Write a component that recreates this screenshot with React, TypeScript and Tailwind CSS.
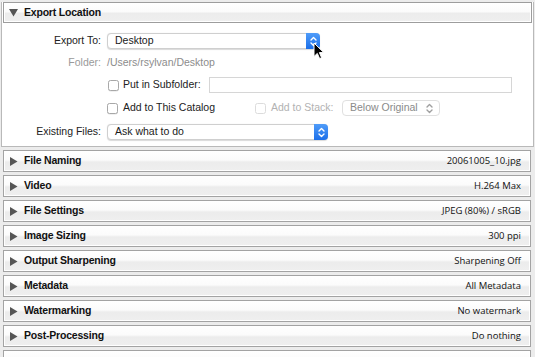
import React from 'react';

const rows = [
  { title: 'File Naming', value: '20061005_10.jpg' },
  { title: 'Video', value: 'H.264 Max' },
  { title: 'File Settings', value: 'JPEG (80%) / sRGB' },
  { title: 'Image Sizing', value: '300 ppi' },
  { title: 'Output Sharpening', value: 'Sharpening Off' },
  { title: 'Metadata', value: 'All Metadata' },
  { title: 'Watermarking', value: 'No watermark' },
  { title: 'Post-Processing', value: 'Do nothing' },
  { title: '', value: '' },
];

const barBg =
  'bg-[linear-gradient(to_bottom,#ffffff_0%,#fbfbfb_45%,#ececec_55%,#efefef_100%)]';

const Stepper = ({ color }: { color: string }) => (
  <svg width="7" height="11" viewBox="0 0 7 11" fill="none" stroke={color} strokeWidth="1.4" strokeLinecap="round" strokeLinejoin="round">
    <path d="M1 4 L3.5 1.5 L6 4" />
    <path d="M1 7 L3.5 9.5 L6 7" />
  </svg>
);

const BlueSelect = ({ text, width }: { text: string; width: string }) => (
  <div className={`${width} h-[16px] flex items-stretch rounded-[4px] bg-white border border-[#cfcfcf] shadow-[0_0.5px_1px_rgba(0,0,0,0.15)]`}>
    <div className="flex-1 flex items-center pl-[7px] text-[#1a1a1a]">{text}</div>
    <div className="w-[14px] -my-[1px] -mr-[1px] rounded-r-[4px] bg-[linear-gradient(to_bottom,#4f9cf9,#1c6fe9)] flex items-center justify-center">
      <Stepper color="#ffffff" />
    </div>
  </div>
);

const Checkbox = ({ disabled }: { disabled?: boolean }) => (
  <div
    className={`w-[11px] h-[11px] rounded-[2.5px] bg-white border ${
      disabled ? 'border-[#dcdcdc]' : 'border-[#a8a8a8] shadow-[0_0.5px_0.5px_rgba(0,0,0,0.12)]'
    }`}
  />
);

export default function App() {
  return (
    <div className="relative w-[535px] h-[357px] overflow-hidden bg-[#ececec] pt-[2px] font-['Liberation_Sans',Arial,sans-serif]">
      {/* Export Location panel */}
      <div className="ml-[1px] w-[533px] border-x border-b border-[#b9b9b9] bg-white">
        <div className={`mx-[1px] h-[21px] border border-[#9d9d9d] shadow-[inset_0_0_0_1px_#ffffff] ${barBg} flex items-center`}>
          <svg width="9" height="8" viewBox="0 0 9 8" className="ml-[5px]">
            <path d="M0 0 H9 L4.5 7.5 Z" fill="#555555" />
          </svg>
          <span className="ml-[6px] text-[10.5px] font-bold text-[#111] tracking-[-0.2px]">Export Location</span>
        </div>

        <div className="pt-[10px] pb-[6px] text-[10.5px]">
          {/* Export To */}
          <div className="flex items-center h-[16px]">
            <div className="w-[99px] text-right text-[#222]">Export To:</div>
            <div className="ml-[6px]">
              <BlueSelect text="Desktop" width="w-[213px]" />
            </div>
          </div>

          {/* Folder */}
          <div className="flex items-center h-[16px] mt-[6px]">
            <div className="w-[99px] text-right text-[#9a9a9a]">Folder:</div>
            <div className="ml-[6px] text-[#8c8c8c]">/Users/rsylvan/Desktop</div>
          </div>

          {/* Put in Subfolder */}
          <div className="flex items-center h-[16px] mt-[6px] pl-[106px]">
            <Checkbox />
            <span className="ml-[4px] w-[86px] text-[#222]">Put in Subfolder:</span>
            <div className="w-[303px] h-[16px] bg-white border border-[#d6d6d6]" />
          </div>

          {/* Add to This Catalog */}
          <div className="flex items-center h-[16px] mt-[7px] pl-[105px]">
            <Checkbox />
            <span className="ml-[5px] w-[132px] text-[#222]">Add to This Catalog</span>
            <Checkbox disabled />
            <span className="ml-[5px] w-[71px] text-[#b2b2b2]">Add to Stack:</span>
            <div className="w-[98px] h-[16px] flex items-center justify-between rounded-[4px] bg-white border border-[#e0e0e0] pl-[7px] pr-[6px] text-[#8a8a8a]">
              <span>Below Original</span>
              <Stepper color="#a0a0a0" />
            </div>
          </div>

          {/* Existing Files */}
          <div className="flex items-center h-[16px] mt-[8px]">
            <div className="w-[99px] text-right text-[#222]">Existing Files:</div>
            <div className="ml-[6px]">
              <BlueSelect text="Ask what to do" width="w-[221px]" />
            </div>
          </div>
        </div>
      </div>

      {/* Collapsed sections */}
      <div className="mt-[3px] flex flex-col gap-[3px]">
        {rows.map((r, i) => (
          <div
            key={i}
            className={`ml-[3px] w-[528px] h-[22px] border border-[#a3a3a3] shadow-[inset_0_0_0_1px_#ffffff] ${barBg} flex items-center`}
          >
            {r.title && (
              <>
                <svg width="8" height="9" viewBox="0 0 8 9" className="ml-[6px]">
                  <path d="M0 0 L7.5 4.5 L0 9 Z" fill="#555555" />
                </svg>
                <span className="ml-[6px] text-[10.5px] font-bold text-[#111] tracking-[-0.2px]">{r.title}</span>
                <span className="ml-auto mr-[9px] text-[9.5px] text-[#111] font-['Open_Sans',Arial,sans-serif]">{r.value}</span>
              </>
            )}
          </div>
        ))}
      </div>

      {/* Mouse pointer over the stepper */}
      <svg
        width="12"
        height="18"
        viewBox="0 0 12 18"
        className="absolute left-[313px] top-[42px]"
      >
        <path
          d="M1 1 L1 14.5 L4.3 11.4 L6.6 16.6 L8.6 15.7 L6.4 10.6 L10.8 10.6 Z"
          fill="#000000"
          stroke="#ffffff"
          strokeWidth="1"
          strokeLinejoin="round"
        />
      </svg>
    </div>
  );
}
